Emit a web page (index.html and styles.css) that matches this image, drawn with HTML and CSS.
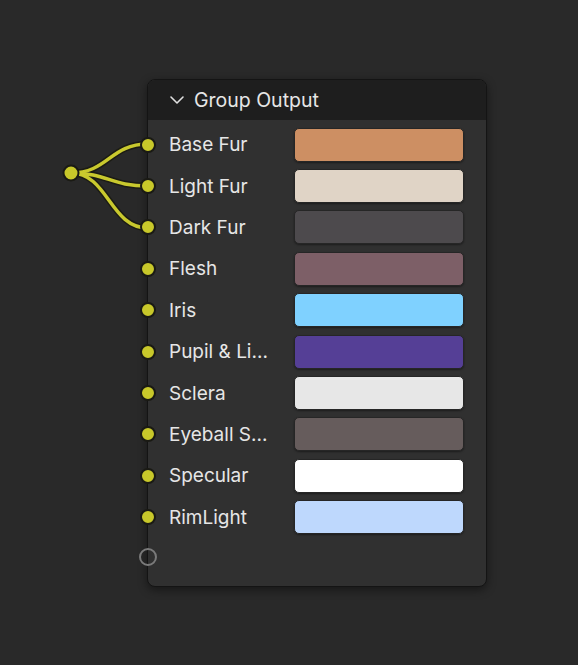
FILE: index.html
```html
<!doctype html>
<html>
	<head>
		<title>Group Output</title>
		<link rel="stylesheet" href="styles.css">
	</head>
	<body>

		<div class="canvas">

			<svg class="wires" width="578" height="665" viewBox="0 0 578 665">
				<g class="wire-outline">
					<path d="M71 173 C 108 173, 110 144, 148 144" />
					<path d="M71 173 C 108 173, 110 186, 148 186" />
					<path d="M71 173 C 108 173, 110 228, 148 228" />
				</g>
				<g class="wire-fill">
					<path d="M71 173 C 108 173, 110 144, 148 144" />
					<path d="M71 173 C 108 173, 110 186, 148 186" />
					<path d="M71 173 C 108 173, 110 228, 148 228" />
				</g>
				<circle class="socket-dot" cx="71" cy="173" r="7.5" />
			</svg>

			<div class="node">
				<div class="node-header">
					<svg class="chevron" width="16" height="16" viewBox="0 0 16 16">
						<path d="M2 5 L8 11 L14 5" />
					</svg>
					<span>Group Output</span>
				</div>
				<div class="node-body">
					<div class="row"><i class="socket"></i><span class="label">Base Fur</span><div class="swatch swatch-base"></div></div>
					<div class="row"><i class="socket"></i><span class="label">Light Fur</span><div class="swatch swatch-light"></div></div>
					<div class="row"><i class="socket"></i><span class="label">Dark Fur</span><div class="swatch swatch-dark"></div></div>
					<div class="row"><i class="socket"></i><span class="label">Flesh</span><div class="swatch swatch-flesh"></div></div>
					<div class="row"><i class="socket"></i><span class="label">Iris</span><div class="swatch swatch-iris"></div></div>
					<div class="row"><i class="socket"></i><span class="label">Pupil &amp; Li...</span><div class="swatch swatch-pupil"></div></div>
					<div class="row"><i class="socket"></i><span class="label">Sclera</span><div class="swatch swatch-sclera"></div></div>
					<div class="row"><i class="socket"></i><span class="label">Eyeball S...</span><div class="swatch swatch-eyeball"></div></div>
					<div class="row"><i class="socket"></i><span class="label">Specular</span><div class="swatch swatch-specular"></div></div>
					<div class="row"><i class="socket"></i><span class="label">RimLight</span><div class="swatch swatch-rim"></div></div>
					<div class="row row-empty"><i class="socket socket-empty"></i></div>
				</div>
			</div>

		</div>

	</body>
</html>
```

FILE: styles.css
```css
* {
	margin: 0;
	padding: 0;
	box-sizing: border-box;
}

html,
body {
	height: 100%;
}

body {
	background: #292929;
	font-family: Inter, "Noto Sans", sans-serif;
	color: #e6e6e6;
	overflow: hidden;
}

.canvas {
	position: relative;
	width: 578px;
	height: 665px;
	padding: 79px 0 0 147px;
}

.wires {
	position: absolute;
	top: 0;
	left: 0;
	z-index: 0;
	pointer-events: none;
}
	.wires path {
		fill: none;
		stroke-linecap: round;
	}
	.wire-outline path {
		stroke: #1c1c14;
		stroke-width: 6.5;
	}
	.wire-fill path {
		stroke: #c9c92e;
		stroke-width: 3.5;
	}
	.socket-dot {
		fill: #c8c82a;
		stroke: #1a1a14;
		stroke-width: 2;
	}

.node {
	position: relative;
	z-index: 1;
	width: 340px;
	border: 1px solid #141414;
	border-radius: 8px;
	background: #303030;
	box-shadow: 0 3px 10px rgba(0,0,0,0.45);
}

.node-header {
	display: flex;
	align-items: center;
	gap: 9px;
	height: 40px;
	padding-left: 21px;
	background: #1e1e1e;
	border-radius: 7px 7px 0 0;
	font-size: 19.5px;
	color: #e6e6e6;
}
	.chevron path {
		fill: none;
		stroke: #e0e0e0;
		stroke-width: 1.6;
		stroke-linecap: round;
		stroke-linejoin: round;
	}

.node-body {
	padding: 4px 0 10px;
}

.row {
	position: relative;
	display: flex;
	align-items: center;
	height: 41.4px;
	padding: 0 22px 0 21px;
}
.row-empty {
	height: 38px;
}

.socket {
	position: absolute;
	left: -8px;
	top: 50%;
	width: 16px;
	height: 16px;
	margin-top: -8px;
	border-radius: 50%;
	background: #c8c82a;
	border: 2px solid #1a1a14;
}
.socket-empty {
	left: -9px;
	width: 18px;
	height: 18px;
	margin-top: -9px;
	background: transparent;
	border: 2px solid #7a7a7a;
}

.label {
	flex: 1;
	font-size: 19px;
	white-space: nowrap;
}

.swatch {
	width: 170px;
	height: 34px;
	border-radius: 5px;
	border: 1px solid #262626;
	box-shadow: 0 1px 2px rgba(0,0,0,0.4);
}
.swatch-base { background: #cd8f63; }
.swatch-light { background: #e0d4c6; }
.swatch-dark { background: #4d4a4d; }
.swatch-flesh { background: #7d5f67; }
.swatch-iris { background: #7fd1ff; }
.swatch-pupil { background: #553f96; }
.swatch-sclera { background: #e7e7e7; }
.swatch-eyeball { background: #665c5c; }
.swatch-specular { background: #ffffff; }
.swatch-rim { background: #bed8fd; }
```
